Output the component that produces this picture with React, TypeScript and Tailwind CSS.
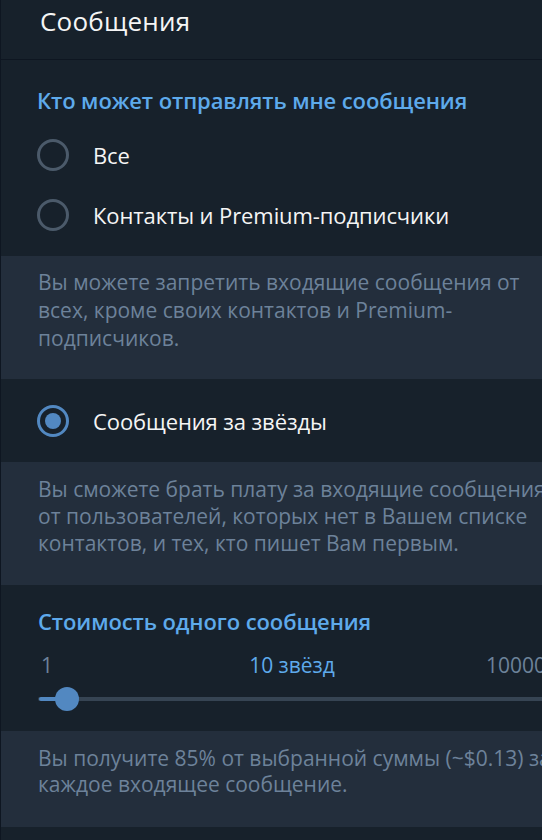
import React from 'react';

const Radio = ({ checked = false }: { checked?: boolean }) => (
  <div
    className={`w-[32px] h-[32px] rounded-full border-[3px] flex items-center justify-center shrink-0 ${
      checked ? 'border-[#5288c1]' : 'border-[#4b5a6a]'
    }`}
  >
    {checked && <div className="w-[16px] h-[16px] rounded-full bg-[#5288c1]" />}
  </div>
);

const Option = ({ label, checked }: { label: string; checked?: boolean }) => (
  <div className="h-[60px] flex items-center pl-[36px] gap-[24px]">
    <Radio checked={checked} />
    <span className="text-[22px] leading-[28px] text-[#f5f5f5] tracking-[-0.1px]">{label}</span>
  </div>
);

const Info = ({ children, className = '' }: { children: React.ReactNode; className?: string }) => (
  <div className={`bg-[#232e3c] pl-[37px] pr-[26px] text-[21px] text-[#6d829a] ${className}`}>{children}</div>
);

export default function App() {
  return (
    <div className="w-[542px] h-[840px] overflow-hidden bg-[#17212b] border-l border-[#0e1621] font-['Open_Sans',sans-serif]">
      <div className="w-[586px]">
        {/* Header */}
        <div className="h-[60px] border-b border-[#0e1621] pl-[39px] pt-[5px]">
          <h1 className="text-[26px] leading-[32px] text-[#f5f5f5] tracking-[0.2px]">Сообщения</h1>
        </div>

        {/* Who can message */}
        <div className="pt-[26px] pb-[11px]">
          <h2 className="px-[36px] h-[28px] leading-[28px] text-[22px] font-semibold text-[#5eaaeb] tracking-[-0.1px]">
            Кто может отправлять мне сообщения
          </h2>
          <div className="mt-[11px]">
            <Option label="Все" />
            <Option label="Контакты и Premium-подписчики" />
          </div>
        </div>

        <Info className="h-[123px] pt-[12px] leading-[28px]">
          Вы можете запретить входящие сообщения от всех, кроме своих контактов и Premium-подписчиков.
        </Info>

        <div className="pt-[12px] pb-[11px]">
          <Option label="Сообщения за звёзды" checked />
        </div>

        <Info className="h-[123px] pt-[14px] leading-[27px]">
          Вы сможете брать плату за входящие сообщения от пользователей, которых нет в Вашем списке контактов, и тех, кто пишет Вам первым.
        </Info>

        {/* Price slider */}
        <div className="h-[146px] pt-[22px] px-[37px]">
          <h2 className="h-[28px] leading-[28px] text-[22px] font-semibold text-[#5eaaeb] tracking-[-0.1px]">
            Стоимость одного сообщения
          </h2>
          <div className="mt-[16px] grid grid-cols-3 text-[21px] leading-[28px]">
            <span className="text-[#6d829a] pl-[3px]">1</span>
            <span className="text-[#5eaaeb] text-center pr-[4px]">10 звёзд</span>
            <span className="text-[#6d829a] text-right pr-[4px]">10000</span>
          </div>
          <div className="relative mt-[8px] h-[24px] flex items-center">
            <div className="w-full h-[4px] rounded-full bg-[#364453]" />
            <div className="absolute left-[1px] w-[28px] h-[4px] rounded-full bg-[#5288c1]" />
            <div className="absolute left-[17px] w-[24px] h-[24px] rounded-full bg-[#5288c1]" />
          </div>
        </div>

        <Info className="h-[96px] pt-[14px] leading-[26px]">
          Вы получите 85% от выбранной суммы (~$0.13) за каждое входящее сообщение.
        </Info>
      </div>
    </div>
  );
}
